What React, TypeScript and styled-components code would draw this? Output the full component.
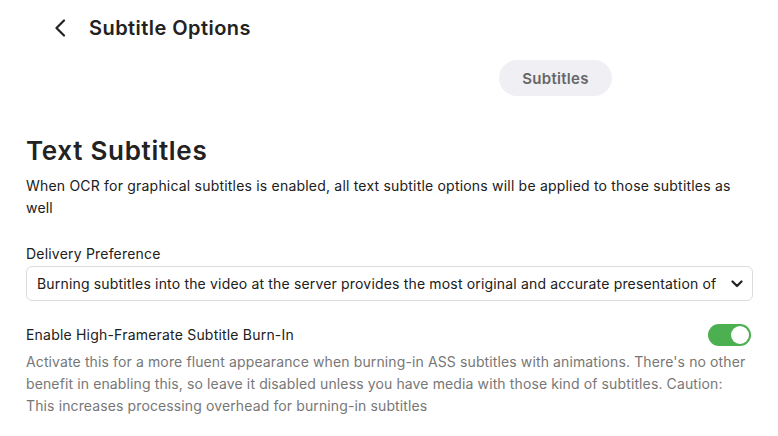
import React from "react";
import styled, { createGlobalStyle } from "styled-components";

const GlobalStyle = createGlobalStyle`
  html, body {
    margin: 0;
    padding: 0;
    background: #ffffff;
  }
  body {
    font-family: "Inter", "Noto Sans", sans-serif;
    color: #202020;
  }
`;

export default function App() {
  return (
    <>
      <GlobalStyle />
      <Page>
        <Header>
          <BackButton aria-label="Back">
            <svg width="12" height="18" viewBox="0 0 12 18" fill="none">
              <path d="M10 1.5 L2.5 9 L10 16.5" stroke="#222" strokeWidth="2.2" strokeLinecap="round" strokeLinejoin="round" />
            </svg>
          </BackButton>
          <HeaderTitle>Subtitle Options</HeaderTitle>
        </Header>
        <TabBar>
          <Tab>Subtitles</Tab>
        </TabBar>
        <Section>
          <SectionTitle>Text Subtitles</SectionTitle>
          <SectionText>
            When OCR for graphical subtitles is enabled, all text subtitle options will be applied to those subtitles as
            well
          </SectionText>
          <Field>
            <FieldLabel>Delivery Preference</FieldLabel>
            <Select>
              <SelectValue>
                Burning subtitles into the video at the server provides the most original and accurate presentation of
              </SelectValue>
              <svg width="12" height="8" viewBox="0 0 12 8" fill="none">
                <path d="M1.5 1.5 L6 6 L10.5 1.5" stroke="#222" strokeWidth="2.2" strokeLinecap="round" strokeLinejoin="round" />
              </svg>
            </Select>
          </Field>
          <ToggleField>
            <ToggleRow>
              <FieldLabel>Enable High-Framerate Subtitle Burn-In</FieldLabel>
              <Switch $on>
                <Knob $on />
              </Switch>
            </ToggleRow>
            <FieldHint>
              Activate this for a more fluent appearance when burning-in ASS subtitles with animations. There's no other
              benefit in enabling this, so leave it disabled unless you have media with those kind of subtitles. Caution:
              This increases processing overhead for burning-in subtitles
            </FieldHint>
          </ToggleField>
        </Section>
      </Page>
    </>
  );
}

const Page = styled.div`
  width: 778px;
  height: 436px;
  overflow: hidden;
  box-sizing: border-box;
`;

const Header = styled.header`
  height: 56px;
  display: flex;
  align-items: center;
  padding-left: 53px;
  gap: 22px;
`;

const BackButton = styled.button`
  background: none;
  border: none;
  padding: 0;
  width: 14px;
  height: 20px;
  display: flex;
  align-items: center;
  justify-content: center;
  cursor: pointer;
`;

const HeaderTitle = styled.h1`
  margin: 0;
  font-size: 20px;
  font-weight: 600;
  color: #222;
  letter-spacing: 0.45px;
`;

const TabBar = styled.nav`
  display: flex;
  justify-content: center;
  padding-left: 333px;
  margin-top: 4px;
`;

const Tab = styled.div`
  width: 113px;
  height: 36px;
  border-radius: 18px;
  background: #f0eff4;
  color: #666;
  font-size: 15px;
  font-weight: 600;
  letter-spacing: 0.3px;
  display: flex;
  align-items: center;
  justify-content: center;
`;

const Section = styled.section`
  padding: 0 25px 0 26px;
  margin-top: 39px;
`;

const SectionTitle = styled.h2`
  margin: 0;
  font-size: 26px;
  font-weight: 600;
  line-height: 32px;
  color: #222;
  letter-spacing: 0.7px;
`;

const SectionText = styled.p`
  margin: 8px 0 0;
  font-size: 14px;
  line-height: 22px;
  color: #202020;
  letter-spacing: 0.2px;
`;

const Field = styled.div`
  margin-top: 25px;
  display: flex;
  flex-direction: column;
  gap: 2px;
`;

const FieldLabel = styled.label`
  font-size: 14px;
  line-height: 20px;
  color: #202020;
  letter-spacing: 0.2px;
`;

const Select = styled.div`
  height: 35px;
  box-sizing: border-box;
  border: 1px solid #dcdcdc;
  border-radius: 6px;
  display: flex;
  align-items: center;
  padding: 0 9px 0 10px;
  gap: 12px;
`;

const SelectValue = styled.span`
  flex: 1;
  white-space: nowrap;
  overflow: hidden;
  font-size: 14px;
  color: #202020;
  letter-spacing: 0.17px;
`;

const ToggleField = styled.div`
  margin-top: 23px;
`;

const ToggleRow = styled.div`
  display: flex;
  align-items: center;
  justify-content: space-between;
  padding-right: 2px;
`;

const Switch = styled.div<{ $on?: boolean }>`
  width: 43px;
  height: 22px;
  border-radius: 11px;
  background: ${(p) => (p.$on ? "#4caf50" : "#ccc")};
  display: flex;
  align-items: center;
  justify-content: ${(p) => (p.$on ? "flex-end" : "flex-start")};
  padding: 0 2px;
  box-sizing: border-box;
`;

const Knob = styled.div<{ $on?: boolean }>`
  width: 18px;
  height: 18px;
  border-radius: 50%;
  background: #fff;
`;

const FieldHint = styled.p`
  margin: 5px 0 0;
  font-size: 14px;
  line-height: 22px;
  color: #777;
  letter-spacing: 0.12px;
`;
